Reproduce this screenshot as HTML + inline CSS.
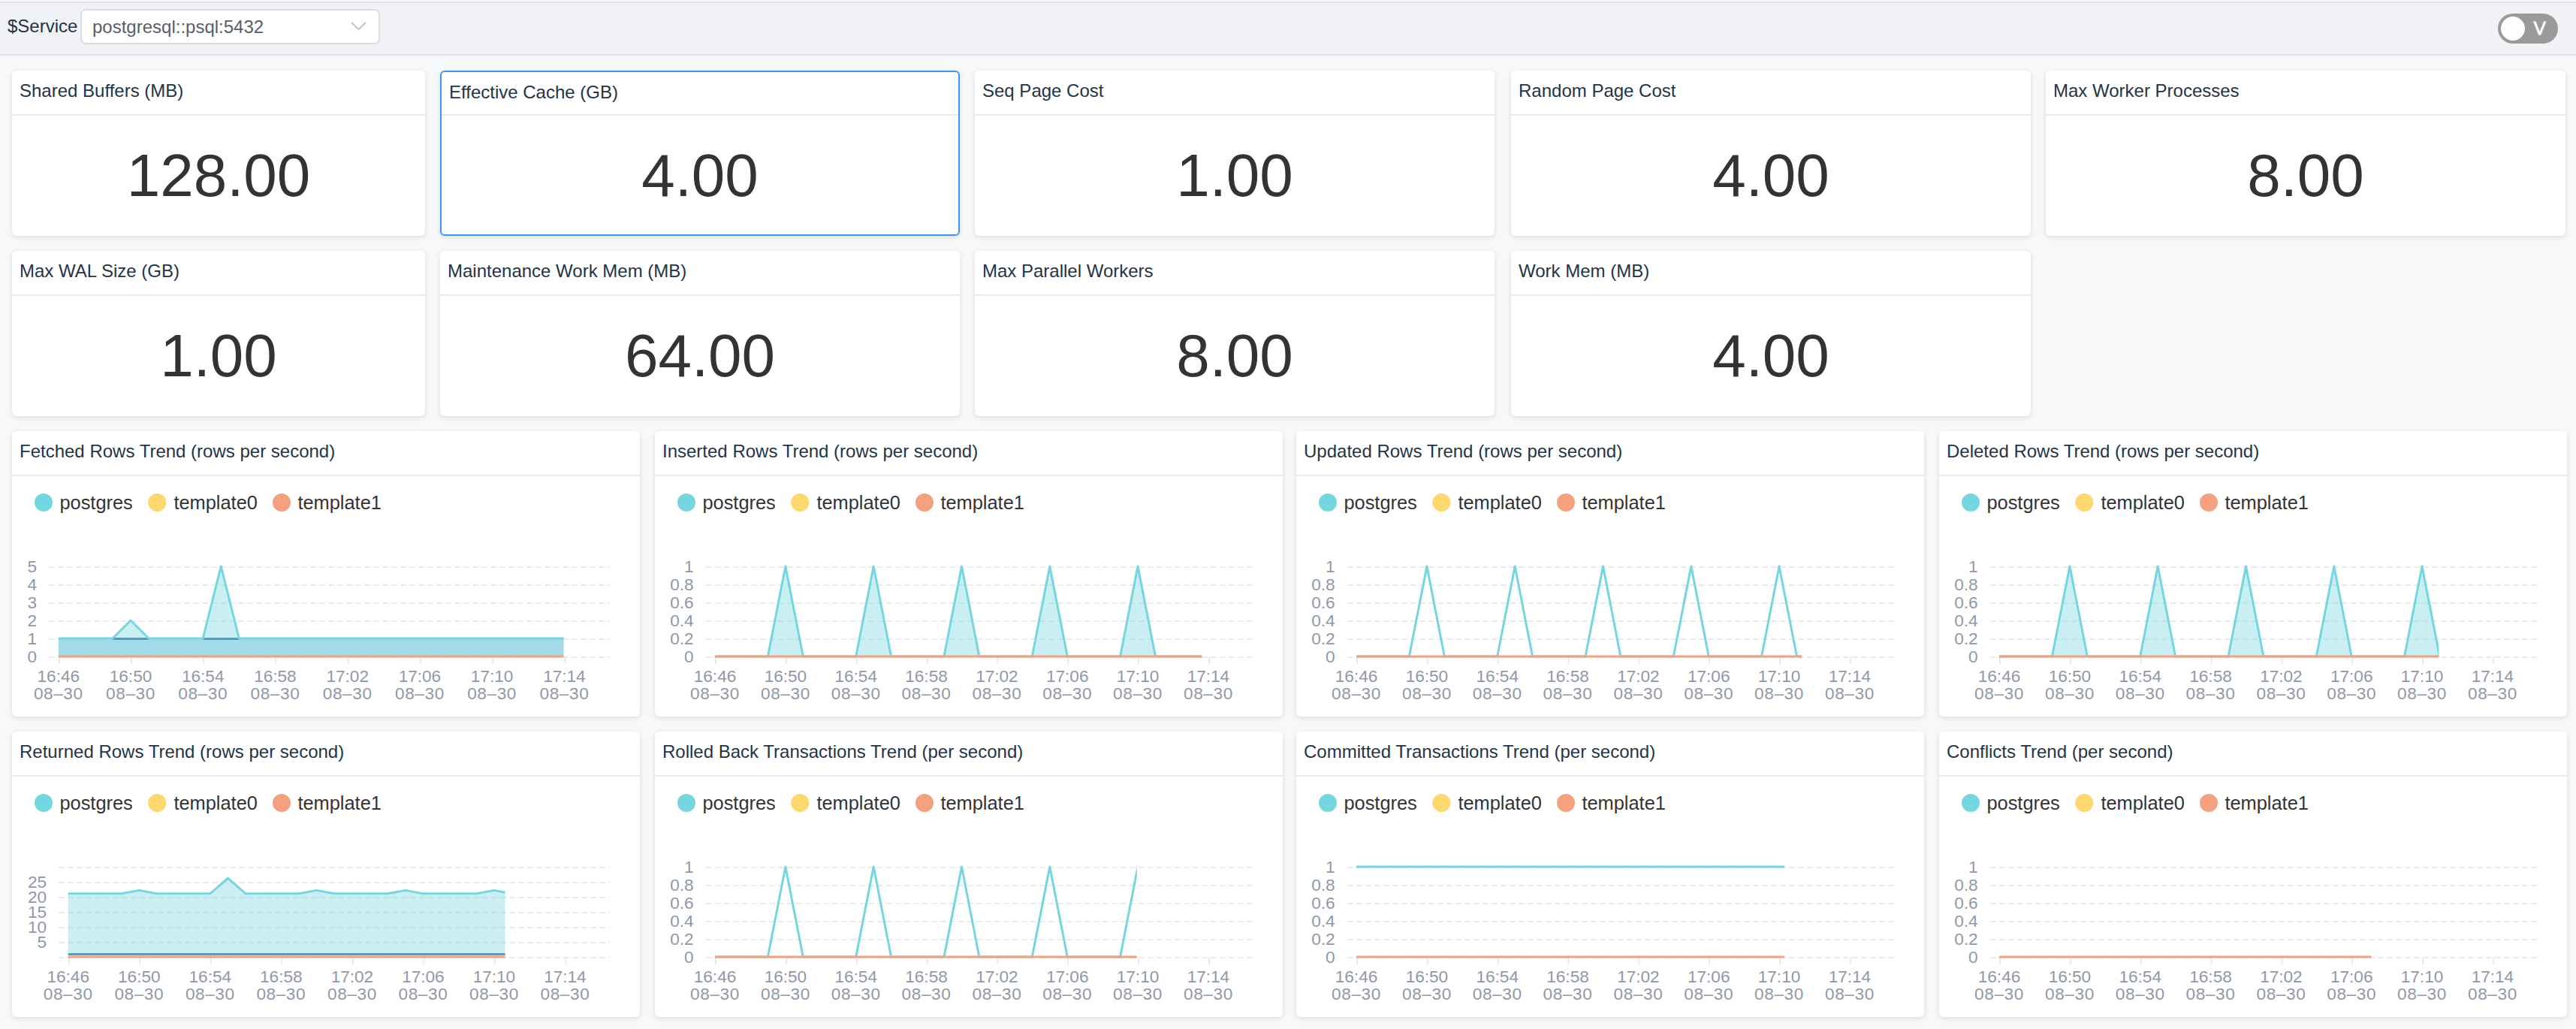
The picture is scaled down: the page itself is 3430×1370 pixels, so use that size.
<!DOCTYPE html>
<html><head><meta charset="utf-8"><style>
*{box-sizing:border-box;margin:0;padding:0}
html,body{width:3430px;height:1370px;overflow:hidden;background:#f7f8fa;font-family:"Liberation Sans", sans-serif}
.hdr{position:absolute;left:0;top:2px;width:3430px;height:72px;background:#f0f2f5;border-top:2px solid #dfe3e8;border-bottom:2px solid #dfe3e8}
.lbl{position:absolute;left:10px;top:17px;font-size:24px;color:#1f3349;line-height:28px}
.sel{position:absolute;left:107px;top:8px;width:399px;height:47px;background:#fff;border:2px solid #d9dce3;border-radius:7px}
.sel span{position:absolute;left:14px;top:8px;font-size:24px;line-height:28px;color:#595d66}
.tog{position:absolute;left:3326px;top:14px;width:80px;height:40px;border-radius:20px;background:#9a9a9a}
.knob{position:absolute;left:4px;top:4px;width:32px;height:32px;border-radius:16px;background:#fff}
.tog span{position:absolute;left:47.5px;top:5.5px;font-size:24.5px;line-height:28px;color:#fff;-webkit-text-stroke:0.8px #fff}
.p{position:absolute;background:#fff;border-radius:6px;box-shadow:0 2px 7px rgba(0,0,0,0.12)}
.p.act{border:2px solid #3a96f8}
.t{position:absolute;left:0;top:0;right:0;height:60px;border-bottom:2px solid #ebebeb}
.t span{position:absolute;left:10px;top:13px;font-size:24px;line-height:28px;color:#233447;white-space:nowrap}
.v{position:absolute;left:0;right:0;top:94px;text-align:center;font-size:80px;line-height:92px;color:#333;white-space:nowrap}
svg{position:absolute;left:0;top:0}

.ax{font-family:"Liberation Sans",sans-serif;font-size:22.6px;fill:#8f98a9}
.lg{font-family:"Liberation Sans",sans-serif;font-size:25.4px;fill:#333}
</style></head>
<body>
<div class="hdr"><div class="lbl">$Service</div><div class="sel"><span>postgresql::psql:5432</span><svg width="24" height="14" style="left:358px;top:15px"><polyline points="1,1 10.5,10 20,1" fill="none" stroke="#c0c4cc" stroke-width="2"/></svg></div><div class="tog"><div class="knob"></div><span>V</span></div></div><div class="p" style="left:16px;top:94px;width:550px;height:220px"><div class="t" style="height:60px"><span>Shared Buffers (MB)</span></div><div class="v" style="">128.00</div></div><div class="p act" style="left:586px;top:94px;width:692px;height:220px"><div class="t" style="height:58px"><span>Effective Cache (GB)</span></div><div class="v" style="top:92px">4.00</div></div><div class="p" style="left:1298px;top:94px;width:692px;height:220px"><div class="t" style="height:60px"><span>Seq Page Cost</span></div><div class="v" style="">1.00</div></div><div class="p" style="left:2012px;top:94px;width:692px;height:220px"><div class="t" style="height:60px"><span>Random Page Cost</span></div><div class="v" style="">4.00</div></div><div class="p" style="left:2724px;top:94px;width:692px;height:220px"><div class="t" style="height:60px"><span>Max Worker Processes</span></div><div class="v" style="">8.00</div></div><div class="p" style="left:16px;top:334px;width:550px;height:220px"><div class="t" style="height:60px"><span>Max WAL Size (GB)</span></div><div class="v" style="">1.00</div></div><div class="p" style="left:586px;top:334px;width:692px;height:220px"><div class="t" style="height:60px"><span>Maintenance Work Mem (MB)</span></div><div class="v" style="">64.00</div></div><div class="p" style="left:1298px;top:334px;width:692px;height:220px"><div class="t" style="height:60px"><span>Max Parallel Workers</span></div><div class="v" style="">8.00</div></div><div class="p" style="left:2012px;top:334px;width:692px;height:220px"><div class="t" style="height:60px"><span>Work Mem (MB)</span></div><div class="v" style="">4.00</div></div><div class="p" style="left:16px;top:574px;width:836px;height:380px"><div class="t"><span>Fetched Rows Trend (rows per second)</span></div><svg width="836" height="380"><line x1="49" y1="181.0" x2="796" y2="181.0" stroke="#eaebed" stroke-width="2" stroke-dasharray="8 4"/><line x1="49" y1="205.0" x2="796" y2="205.0" stroke="#eaebed" stroke-width="2" stroke-dasharray="8 4"/><line x1="49" y1="229.0" x2="796" y2="229.0" stroke="#eaebed" stroke-width="2" stroke-dasharray="8 4"/><line x1="49" y1="253.0" x2="796" y2="253.0" stroke="#eaebed" stroke-width="2" stroke-dasharray="8 4"/><line x1="49" y1="277.0" x2="796" y2="277.0" stroke="#eaebed" stroke-width="2" stroke-dasharray="8 4"/><line x1="49" y1="301.0" x2="796" y2="301.0" stroke="#eaebed" stroke-width="2" stroke-dasharray="8 4"/><text x="33" y="307.5" text-anchor="end" class="ax">0</text><text x="33" y="283.5" text-anchor="end" class="ax">1</text><text x="33" y="259.5" text-anchor="end" class="ax">2</text><text x="33" y="235.5" text-anchor="end" class="ax">3</text><text x="33" y="211.5" text-anchor="end" class="ax">4</text><text x="33" y="187.5" text-anchor="end" class="ax">5</text><line x1="62.8" y1="301" x2="62.8" y2="310" stroke="#e8eaed" stroke-width="2"/><text x="61.8" y="334.2" text-anchor="middle" class="ax">16:46</text><text x="61.8" y="356.6" text-anchor="middle" class="ax" letter-spacing="0.6">08–30</text><line x1="159.0" y1="301" x2="159.0" y2="310" stroke="#e8eaed" stroke-width="2"/><text x="158.0" y="334.2" text-anchor="middle" class="ax">16:50</text><text x="158.0" y="356.6" text-anchor="middle" class="ax" letter-spacing="0.6">08–30</text><line x1="255.2" y1="301" x2="255.2" y2="310" stroke="#e8eaed" stroke-width="2"/><text x="254.2" y="334.2" text-anchor="middle" class="ax">16:54</text><text x="254.2" y="356.6" text-anchor="middle" class="ax" letter-spacing="0.6">08–30</text><line x1="351.4" y1="301" x2="351.4" y2="310" stroke="#e8eaed" stroke-width="2"/><text x="350.4" y="334.2" text-anchor="middle" class="ax">16:58</text><text x="350.4" y="356.6" text-anchor="middle" class="ax" letter-spacing="0.6">08–30</text><line x1="447.7" y1="301" x2="447.7" y2="310" stroke="#e8eaed" stroke-width="2"/><text x="446.7" y="334.2" text-anchor="middle" class="ax">17:02</text><text x="446.7" y="356.6" text-anchor="middle" class="ax" letter-spacing="0.6">08–30</text><line x1="543.9" y1="301" x2="543.9" y2="310" stroke="#e8eaed" stroke-width="2"/><text x="542.9" y="334.2" text-anchor="middle" class="ax">17:06</text><text x="542.9" y="356.6" text-anchor="middle" class="ax" letter-spacing="0.6">08–30</text><line x1="640.1" y1="301" x2="640.1" y2="310" stroke="#e8eaed" stroke-width="2"/><text x="639.1" y="334.2" text-anchor="middle" class="ax">17:10</text><text x="639.1" y="356.6" text-anchor="middle" class="ax" letter-spacing="0.6">08–30</text><line x1="736.4" y1="301" x2="736.4" y2="310" stroke="#e8eaed" stroke-width="2"/><text x="735.4" y="334.2" text-anchor="middle" class="ax">17:14</text><text x="735.4" y="356.6" text-anchor="middle" class="ax" letter-spacing="0.6">08–30</text><g transform="translate(0,-1)"><rect x="61.8" y="277.0" width="672.7" height="24.0" fill="#a1dae8"/><polygon points="133.9,277.0 158.0,253.0 182.0,277.0" fill="#74d6df" fill-opacity="0.38"/><line x1="133.9" y1="277.5" x2="182.0" y2="277.5" stroke="#4a9cd6" stroke-width="3"/><polygon points="254.2,277.0 278.3,181.0 302.3,277.0" fill="#74d6df" fill-opacity="0.38"/><line x1="254.2" y1="277.5" x2="302.3" y2="277.5" stroke="#4a9cd6" stroke-width="3"/><polyline points="61.8,277.0 133.9,277.0 158.0,253.0 182.0,277.0 254.2,277.0 278.3,181.0 302.3,277.0 734.5,277.0" fill="none" stroke="#74d6df" stroke-width="3" stroke-linejoin="round"/><line x1="61.8" y1="301.0" x2="734.5" y2="301.0" stroke="#f5a07f" stroke-width="3"/></g><circle cx="42" cy="95" r="12" fill="#74d6df"/><text x="63.4" y="104" class="lg">postgres</text><circle cx="193.2" cy="95" r="12" fill="#fcd86f"/><text x="215.4" y="104" class="lg">template0</text><circle cx="359" cy="95" r="12" fill="#f5a07f"/><text x="380.4" y="104" class="lg">template1</text></svg></div><div class="p" style="left:872px;top:574px;width:836px;height:380px"><div class="t"><span>Inserted Rows Trend (rows per second)</span></div><svg width="836" height="380"><line x1="67.6" y1="181.0" x2="796" y2="181.0" stroke="#eaebed" stroke-width="2" stroke-dasharray="8 4"/><line x1="67.6" y1="205.0" x2="796" y2="205.0" stroke="#eaebed" stroke-width="2" stroke-dasharray="8 4"/><line x1="67.6" y1="229.0" x2="796" y2="229.0" stroke="#eaebed" stroke-width="2" stroke-dasharray="8 4"/><line x1="67.6" y1="253.0" x2="796" y2="253.0" stroke="#eaebed" stroke-width="2" stroke-dasharray="8 4"/><line x1="67.6" y1="277.0" x2="796" y2="277.0" stroke="#eaebed" stroke-width="2" stroke-dasharray="8 4"/><line x1="67.6" y1="301.0" x2="796" y2="301.0" stroke="#eaebed" stroke-width="2" stroke-dasharray="8 4"/><text x="51.599999999999994" y="307.5" text-anchor="end" class="ax">0</text><text x="51.599999999999994" y="283.5" text-anchor="end" class="ax">0.2</text><text x="51.599999999999994" y="259.5" text-anchor="end" class="ax">0.4</text><text x="51.599999999999994" y="235.5" text-anchor="end" class="ax">0.6</text><text x="51.599999999999994" y="211.5" text-anchor="end" class="ax">0.8</text><text x="51.599999999999994" y="187.5" text-anchor="end" class="ax">1</text><line x1="81.0" y1="301" x2="81.0" y2="310" stroke="#e8eaed" stroke-width="2"/><text x="80.0" y="334.2" text-anchor="middle" class="ax">16:46</text><text x="80.0" y="356.6" text-anchor="middle" class="ax" letter-spacing="0.6">08–30</text><line x1="174.9" y1="301" x2="174.9" y2="310" stroke="#e8eaed" stroke-width="2"/><text x="173.9" y="334.2" text-anchor="middle" class="ax">16:50</text><text x="173.9" y="356.6" text-anchor="middle" class="ax" letter-spacing="0.6">08–30</text><line x1="268.7" y1="301" x2="268.7" y2="310" stroke="#e8eaed" stroke-width="2"/><text x="267.7" y="334.2" text-anchor="middle" class="ax">16:54</text><text x="267.7" y="356.6" text-anchor="middle" class="ax" letter-spacing="0.6">08–30</text><line x1="362.5" y1="301" x2="362.5" y2="310" stroke="#e8eaed" stroke-width="2"/><text x="361.5" y="334.2" text-anchor="middle" class="ax">16:58</text><text x="361.5" y="356.6" text-anchor="middle" class="ax" letter-spacing="0.6">08–30</text><line x1="456.4" y1="301" x2="456.4" y2="310" stroke="#e8eaed" stroke-width="2"/><text x="455.4" y="334.2" text-anchor="middle" class="ax">17:02</text><text x="455.4" y="356.6" text-anchor="middle" class="ax" letter-spacing="0.6">08–30</text><line x1="550.2" y1="301" x2="550.2" y2="310" stroke="#e8eaed" stroke-width="2"/><text x="549.2" y="334.2" text-anchor="middle" class="ax">17:06</text><text x="549.2" y="356.6" text-anchor="middle" class="ax" letter-spacing="0.6">08–30</text><line x1="644.0" y1="301" x2="644.0" y2="310" stroke="#e8eaed" stroke-width="2"/><text x="643.0" y="334.2" text-anchor="middle" class="ax">17:10</text><text x="643.0" y="356.6" text-anchor="middle" class="ax" letter-spacing="0.6">08–30</text><line x1="737.9" y1="301" x2="737.9" y2="310" stroke="#e8eaed" stroke-width="2"/><text x="736.9" y="334.2" text-anchor="middle" class="ax">17:14</text><text x="736.9" y="356.6" text-anchor="middle" class="ax" letter-spacing="0.6">08–30</text><g transform="translate(0,-1)"><clipPath id="c_inserted"><rect x="77.0" y="0" width="651.2" height="380"/></clipPath><g clip-path="url(#c_inserted)"><polygon points="80.0,301.0 150.4,301.0 173.9,181.0 197.3,301.0 267.7,301.0 291.2,181.0 314.6,301.0 385.0,301.0 408.5,181.0 431.9,301.0 502.3,301.0 525.8,181.0 549.2,301.0 619.6,301.0 643.0,181.0 666.5,301.0 736.9,301.0 760.3,181.0 783.8,301.0 1018.4,301.0 1018.4,301.0 80.0,301.0" fill="#74d6df" fill-opacity="0.38"/><polyline points="80.0,301.0 150.4,301.0 173.9,181.0 197.3,301.0 267.7,301.0 291.2,181.0 314.6,301.0 385.0,301.0 408.5,181.0 431.9,301.0 502.3,301.0 525.8,181.0 549.2,301.0 619.6,301.0 643.0,181.0 666.5,301.0 736.9,301.0 760.3,181.0 783.8,301.0 1018.4,301.0" fill="none" stroke="#74d6df" stroke-width="3" stroke-linejoin="round"/><line x1="80.0" y1="301.0" x2="1018.4" y2="301.0" stroke="#f5a07f" stroke-width="3"/></g></g><circle cx="42" cy="95" r="12" fill="#74d6df"/><text x="63.4" y="104" class="lg">postgres</text><circle cx="193.2" cy="95" r="12" fill="#fcd86f"/><text x="215.4" y="104" class="lg">template0</text><circle cx="359" cy="95" r="12" fill="#f5a07f"/><text x="380.4" y="104" class="lg">template1</text></svg></div><div class="p" style="left:1726px;top:574px;width:836px;height:380px"><div class="t"><span>Updated Rows Trend (rows per second)</span></div><svg width="836" height="380"><line x1="67.6" y1="181.0" x2="796" y2="181.0" stroke="#eaebed" stroke-width="2" stroke-dasharray="8 4"/><line x1="67.6" y1="205.0" x2="796" y2="205.0" stroke="#eaebed" stroke-width="2" stroke-dasharray="8 4"/><line x1="67.6" y1="229.0" x2="796" y2="229.0" stroke="#eaebed" stroke-width="2" stroke-dasharray="8 4"/><line x1="67.6" y1="253.0" x2="796" y2="253.0" stroke="#eaebed" stroke-width="2" stroke-dasharray="8 4"/><line x1="67.6" y1="277.0" x2="796" y2="277.0" stroke="#eaebed" stroke-width="2" stroke-dasharray="8 4"/><line x1="67.6" y1="301.0" x2="796" y2="301.0" stroke="#eaebed" stroke-width="2" stroke-dasharray="8 4"/><text x="51.599999999999994" y="307.5" text-anchor="end" class="ax">0</text><text x="51.599999999999994" y="283.5" text-anchor="end" class="ax">0.2</text><text x="51.599999999999994" y="259.5" text-anchor="end" class="ax">0.4</text><text x="51.599999999999994" y="235.5" text-anchor="end" class="ax">0.6</text><text x="51.599999999999994" y="211.5" text-anchor="end" class="ax">0.8</text><text x="51.599999999999994" y="187.5" text-anchor="end" class="ax">1</text><line x1="81.0" y1="301" x2="81.0" y2="310" stroke="#e8eaed" stroke-width="2"/><text x="80.0" y="334.2" text-anchor="middle" class="ax">16:46</text><text x="80.0" y="356.6" text-anchor="middle" class="ax" letter-spacing="0.6">08–30</text><line x1="174.9" y1="301" x2="174.9" y2="310" stroke="#e8eaed" stroke-width="2"/><text x="173.9" y="334.2" text-anchor="middle" class="ax">16:50</text><text x="173.9" y="356.6" text-anchor="middle" class="ax" letter-spacing="0.6">08–30</text><line x1="268.7" y1="301" x2="268.7" y2="310" stroke="#e8eaed" stroke-width="2"/><text x="267.7" y="334.2" text-anchor="middle" class="ax">16:54</text><text x="267.7" y="356.6" text-anchor="middle" class="ax" letter-spacing="0.6">08–30</text><line x1="362.5" y1="301" x2="362.5" y2="310" stroke="#e8eaed" stroke-width="2"/><text x="361.5" y="334.2" text-anchor="middle" class="ax">16:58</text><text x="361.5" y="356.6" text-anchor="middle" class="ax" letter-spacing="0.6">08–30</text><line x1="456.4" y1="301" x2="456.4" y2="310" stroke="#e8eaed" stroke-width="2"/><text x="455.4" y="334.2" text-anchor="middle" class="ax">17:02</text><text x="455.4" y="356.6" text-anchor="middle" class="ax" letter-spacing="0.6">08–30</text><line x1="550.2" y1="301" x2="550.2" y2="310" stroke="#e8eaed" stroke-width="2"/><text x="549.2" y="334.2" text-anchor="middle" class="ax">17:06</text><text x="549.2" y="356.6" text-anchor="middle" class="ax" letter-spacing="0.6">08–30</text><line x1="644.0" y1="301" x2="644.0" y2="310" stroke="#e8eaed" stroke-width="2"/><text x="643.0" y="334.2" text-anchor="middle" class="ax">17:10</text><text x="643.0" y="356.6" text-anchor="middle" class="ax" letter-spacing="0.6">08–30</text><line x1="737.9" y1="301" x2="737.9" y2="310" stroke="#e8eaed" stroke-width="2"/><text x="736.9" y="334.2" text-anchor="middle" class="ax">17:14</text><text x="736.9" y="356.6" text-anchor="middle" class="ax" letter-spacing="0.6">08–30</text><g transform="translate(0,-1)"><clipPath id="c_updated"><rect x="77.0" y="0" width="595.8" height="380"/></clipPath><g clip-path="url(#c_updated)"><polyline points="80.0,301.0 150.4,301.0 173.9,181.0 197.3,301.0 267.7,301.0 291.2,181.0 314.6,301.0 385.0,301.0 408.5,181.0 431.9,301.0 502.3,301.0 525.8,181.0 549.2,301.0 619.6,301.0 643.0,181.0 666.5,301.0 736.9,301.0 760.3,181.0 783.8,301.0 1018.4,301.0" fill="none" stroke="#74d6df" stroke-width="3" stroke-linejoin="round"/><line x1="80.0" y1="301.0" x2="1018.4" y2="301.0" stroke="#f5a07f" stroke-width="3"/></g></g><circle cx="42" cy="95" r="12" fill="#74d6df"/><text x="63.4" y="104" class="lg">postgres</text><circle cx="193.2" cy="95" r="12" fill="#fcd86f"/><text x="215.4" y="104" class="lg">template0</text><circle cx="359" cy="95" r="12" fill="#f5a07f"/><text x="380.4" y="104" class="lg">template1</text></svg></div><div class="p" style="left:2582px;top:574px;width:836px;height:380px"><div class="t"><span>Deleted Rows Trend (rows per second)</span></div><svg width="836" height="380"><line x1="67.6" y1="181.0" x2="796" y2="181.0" stroke="#eaebed" stroke-width="2" stroke-dasharray="8 4"/><line x1="67.6" y1="205.0" x2="796" y2="205.0" stroke="#eaebed" stroke-width="2" stroke-dasharray="8 4"/><line x1="67.6" y1="229.0" x2="796" y2="229.0" stroke="#eaebed" stroke-width="2" stroke-dasharray="8 4"/><line x1="67.6" y1="253.0" x2="796" y2="253.0" stroke="#eaebed" stroke-width="2" stroke-dasharray="8 4"/><line x1="67.6" y1="277.0" x2="796" y2="277.0" stroke="#eaebed" stroke-width="2" stroke-dasharray="8 4"/><line x1="67.6" y1="301.0" x2="796" y2="301.0" stroke="#eaebed" stroke-width="2" stroke-dasharray="8 4"/><text x="51.599999999999994" y="307.5" text-anchor="end" class="ax">0</text><text x="51.599999999999994" y="283.5" text-anchor="end" class="ax">0.2</text><text x="51.599999999999994" y="259.5" text-anchor="end" class="ax">0.4</text><text x="51.599999999999994" y="235.5" text-anchor="end" class="ax">0.6</text><text x="51.599999999999994" y="211.5" text-anchor="end" class="ax">0.8</text><text x="51.599999999999994" y="187.5" text-anchor="end" class="ax">1</text><line x1="81.0" y1="301" x2="81.0" y2="310" stroke="#e8eaed" stroke-width="2"/><text x="80.0" y="334.2" text-anchor="middle" class="ax">16:46</text><text x="80.0" y="356.6" text-anchor="middle" class="ax" letter-spacing="0.6">08–30</text><line x1="174.9" y1="301" x2="174.9" y2="310" stroke="#e8eaed" stroke-width="2"/><text x="173.9" y="334.2" text-anchor="middle" class="ax">16:50</text><text x="173.9" y="356.6" text-anchor="middle" class="ax" letter-spacing="0.6">08–30</text><line x1="268.7" y1="301" x2="268.7" y2="310" stroke="#e8eaed" stroke-width="2"/><text x="267.7" y="334.2" text-anchor="middle" class="ax">16:54</text><text x="267.7" y="356.6" text-anchor="middle" class="ax" letter-spacing="0.6">08–30</text><line x1="362.5" y1="301" x2="362.5" y2="310" stroke="#e8eaed" stroke-width="2"/><text x="361.5" y="334.2" text-anchor="middle" class="ax">16:58</text><text x="361.5" y="356.6" text-anchor="middle" class="ax" letter-spacing="0.6">08–30</text><line x1="456.4" y1="301" x2="456.4" y2="310" stroke="#e8eaed" stroke-width="2"/><text x="455.4" y="334.2" text-anchor="middle" class="ax">17:02</text><text x="455.4" y="356.6" text-anchor="middle" class="ax" letter-spacing="0.6">08–30</text><line x1="550.2" y1="301" x2="550.2" y2="310" stroke="#e8eaed" stroke-width="2"/><text x="549.2" y="334.2" text-anchor="middle" class="ax">17:06</text><text x="549.2" y="356.6" text-anchor="middle" class="ax" letter-spacing="0.6">08–30</text><line x1="644.0" y1="301" x2="644.0" y2="310" stroke="#e8eaed" stroke-width="2"/><text x="643.0" y="334.2" text-anchor="middle" class="ax">17:10</text><text x="643.0" y="356.6" text-anchor="middle" class="ax" letter-spacing="0.6">08–30</text><line x1="737.9" y1="301" x2="737.9" y2="310" stroke="#e8eaed" stroke-width="2"/><text x="736.9" y="334.2" text-anchor="middle" class="ax">17:14</text><text x="736.9" y="356.6" text-anchor="middle" class="ax" letter-spacing="0.6">08–30</text><g transform="translate(0,-1)"><clipPath id="c_deleted"><rect x="77.0" y="0" width="588.4" height="380"/></clipPath><g clip-path="url(#c_deleted)"><polygon points="80.0,301.0 150.4,301.0 173.9,181.0 197.3,301.0 267.7,301.0 291.2,181.0 314.6,301.0 385.0,301.0 408.5,181.0 431.9,301.0 502.3,301.0 525.8,181.0 549.2,301.0 619.6,301.0 643.0,181.0 666.5,301.0 736.9,301.0 760.3,181.0 783.8,301.0 1018.4,301.0 1018.4,301.0 80.0,301.0" fill="#74d6df" fill-opacity="0.38"/><polyline points="80.0,301.0 150.4,301.0 173.9,181.0 197.3,301.0 267.7,301.0 291.2,181.0 314.6,301.0 385.0,301.0 408.5,181.0 431.9,301.0 502.3,301.0 525.8,181.0 549.2,301.0 619.6,301.0 643.0,181.0 666.5,301.0 736.9,301.0 760.3,181.0 783.8,301.0 1018.4,301.0" fill="none" stroke="#74d6df" stroke-width="3" stroke-linejoin="round"/><line x1="80.0" y1="301.0" x2="1018.4" y2="301.0" stroke="#f5a07f" stroke-width="3"/></g></g><circle cx="42" cy="95" r="12" fill="#74d6df"/><text x="63.4" y="104" class="lg">postgres</text><circle cx="193.2" cy="95" r="12" fill="#fcd86f"/><text x="215.4" y="104" class="lg">template0</text><circle cx="359" cy="95" r="12" fill="#f5a07f"/><text x="380.4" y="104" class="lg">template1</text></svg></div><div class="p" style="left:16px;top:974px;width:836px;height:380px"><div class="t"><span>Returned Rows Trend (rows per second)</span></div><svg width="836" height="380"><line x1="62.2" y1="181.0" x2="796" y2="181.0" stroke="#eaebed" stroke-width="2" stroke-dasharray="8 4"/><line x1="62.2" y1="201.0" x2="796" y2="201.0" stroke="#eaebed" stroke-width="2" stroke-dasharray="8 4"/><line x1="62.2" y1="221.0" x2="796" y2="221.0" stroke="#eaebed" stroke-width="2" stroke-dasharray="8 4"/><line x1="62.2" y1="241.0" x2="796" y2="241.0" stroke="#eaebed" stroke-width="2" stroke-dasharray="8 4"/><line x1="62.2" y1="261.0" x2="796" y2="261.0" stroke="#eaebed" stroke-width="2" stroke-dasharray="8 4"/><line x1="62.2" y1="281.0" x2="796" y2="281.0" stroke="#eaebed" stroke-width="2" stroke-dasharray="8 4"/><line x1="62.2" y1="301.0" x2="796" y2="301.0" stroke="#eaebed" stroke-width="2" stroke-dasharray="8 4"/><text x="46.2" y="287.5" text-anchor="end" class="ax">5</text><text x="46.2" y="267.5" text-anchor="end" class="ax">10</text><text x="46.2" y="247.5" text-anchor="end" class="ax">15</text><text x="46.2" y="227.5" text-anchor="end" class="ax">20</text><text x="46.2" y="207.5" text-anchor="end" class="ax">25</text><line x1="75.7" y1="301" x2="75.7" y2="310" stroke="#e8eaed" stroke-width="2"/><text x="74.7" y="334.2" text-anchor="middle" class="ax">16:46</text><text x="74.7" y="356.6" text-anchor="middle" class="ax" letter-spacing="0.6">08–30</text><line x1="170.3" y1="301" x2="170.3" y2="310" stroke="#e8eaed" stroke-width="2"/><text x="169.3" y="334.2" text-anchor="middle" class="ax">16:50</text><text x="169.3" y="356.6" text-anchor="middle" class="ax" letter-spacing="0.6">08–30</text><line x1="264.8" y1="301" x2="264.8" y2="310" stroke="#e8eaed" stroke-width="2"/><text x="263.8" y="334.2" text-anchor="middle" class="ax">16:54</text><text x="263.8" y="356.6" text-anchor="middle" class="ax" letter-spacing="0.6">08–30</text><line x1="359.3" y1="301" x2="359.3" y2="310" stroke="#e8eaed" stroke-width="2"/><text x="358.3" y="334.2" text-anchor="middle" class="ax">16:58</text><text x="358.3" y="356.6" text-anchor="middle" class="ax" letter-spacing="0.6">08–30</text><line x1="453.9" y1="301" x2="453.9" y2="310" stroke="#e8eaed" stroke-width="2"/><text x="452.9" y="334.2" text-anchor="middle" class="ax">17:02</text><text x="452.9" y="356.6" text-anchor="middle" class="ax" letter-spacing="0.6">08–30</text><line x1="548.4" y1="301" x2="548.4" y2="310" stroke="#e8eaed" stroke-width="2"/><text x="547.4" y="334.2" text-anchor="middle" class="ax">17:06</text><text x="547.4" y="356.6" text-anchor="middle" class="ax" letter-spacing="0.6">08–30</text><line x1="642.9" y1="301" x2="642.9" y2="310" stroke="#e8eaed" stroke-width="2"/><text x="641.9" y="334.2" text-anchor="middle" class="ax">17:10</text><text x="641.9" y="356.6" text-anchor="middle" class="ax" letter-spacing="0.6">08–30</text><line x1="737.4" y1="301" x2="737.4" y2="310" stroke="#e8eaed" stroke-width="2"/><text x="736.4" y="334.2" text-anchor="middle" class="ax">17:14</text><text x="736.4" y="356.6" text-anchor="middle" class="ax" letter-spacing="0.6">08–30</text><g transform="translate(0,-1)"><polygon points="74.7,216.8 145.6,216.8 169.3,212.4 192.9,216.8 263.8,216.8 287.4,196.2 311.1,216.8 382.0,216.8 405.6,212.4 429.2,216.8 500.1,216.8 523.7,212.4 547.4,216.8 618.3,216.8 641.9,212.4 656.6,215.2 656.6,297.4 74.7,297.4" fill="#74d6df" fill-opacity="0.38"/><polyline points="74.7,216.8 145.6,216.8 169.3,212.4 192.9,216.8 263.8,216.8 287.4,196.2 311.1,216.8 382.0,216.8 405.6,212.4 429.2,216.8 500.1,216.8 523.7,212.4 547.4,216.8 618.3,216.8 641.9,212.4 656.6,215.2" fill="none" stroke="#74d6df" stroke-width="3" stroke-linejoin="round"/><line x1="74.7" y1="297.4" x2="656.6" y2="297.4" stroke="#4a9cd6" stroke-width="3"/><line x1="74.7" y1="301.0" x2="656.6" y2="301.0" stroke="#f5a07f" stroke-width="3"/></g><circle cx="42" cy="95" r="12" fill="#74d6df"/><text x="63.4" y="104" class="lg">postgres</text><circle cx="193.2" cy="95" r="12" fill="#fcd86f"/><text x="215.4" y="104" class="lg">template0</text><circle cx="359" cy="95" r="12" fill="#f5a07f"/><text x="380.4" y="104" class="lg">template1</text></svg></div><div class="p" style="left:872px;top:974px;width:836px;height:380px"><div class="t"><span>Rolled Back Transactions Trend (per second)</span></div><svg width="836" height="380"><line x1="67.6" y1="181.0" x2="796" y2="181.0" stroke="#eaebed" stroke-width="2" stroke-dasharray="8 4"/><line x1="67.6" y1="205.0" x2="796" y2="205.0" stroke="#eaebed" stroke-width="2" stroke-dasharray="8 4"/><line x1="67.6" y1="229.0" x2="796" y2="229.0" stroke="#eaebed" stroke-width="2" stroke-dasharray="8 4"/><line x1="67.6" y1="253.0" x2="796" y2="253.0" stroke="#eaebed" stroke-width="2" stroke-dasharray="8 4"/><line x1="67.6" y1="277.0" x2="796" y2="277.0" stroke="#eaebed" stroke-width="2" stroke-dasharray="8 4"/><line x1="67.6" y1="301.0" x2="796" y2="301.0" stroke="#eaebed" stroke-width="2" stroke-dasharray="8 4"/><text x="51.599999999999994" y="307.5" text-anchor="end" class="ax">0</text><text x="51.599999999999994" y="283.5" text-anchor="end" class="ax">0.2</text><text x="51.599999999999994" y="259.5" text-anchor="end" class="ax">0.4</text><text x="51.599999999999994" y="235.5" text-anchor="end" class="ax">0.6</text><text x="51.599999999999994" y="211.5" text-anchor="end" class="ax">0.8</text><text x="51.599999999999994" y="187.5" text-anchor="end" class="ax">1</text><line x1="81.0" y1="301" x2="81.0" y2="310" stroke="#e8eaed" stroke-width="2"/><text x="80.0" y="334.2" text-anchor="middle" class="ax">16:46</text><text x="80.0" y="356.6" text-anchor="middle" class="ax" letter-spacing="0.6">08–30</text><line x1="174.9" y1="301" x2="174.9" y2="310" stroke="#e8eaed" stroke-width="2"/><text x="173.9" y="334.2" text-anchor="middle" class="ax">16:50</text><text x="173.9" y="356.6" text-anchor="middle" class="ax" letter-spacing="0.6">08–30</text><line x1="268.7" y1="301" x2="268.7" y2="310" stroke="#e8eaed" stroke-width="2"/><text x="267.7" y="334.2" text-anchor="middle" class="ax">16:54</text><text x="267.7" y="356.6" text-anchor="middle" class="ax" letter-spacing="0.6">08–30</text><line x1="362.5" y1="301" x2="362.5" y2="310" stroke="#e8eaed" stroke-width="2"/><text x="361.5" y="334.2" text-anchor="middle" class="ax">16:58</text><text x="361.5" y="356.6" text-anchor="middle" class="ax" letter-spacing="0.6">08–30</text><line x1="456.4" y1="301" x2="456.4" y2="310" stroke="#e8eaed" stroke-width="2"/><text x="455.4" y="334.2" text-anchor="middle" class="ax">17:02</text><text x="455.4" y="356.6" text-anchor="middle" class="ax" letter-spacing="0.6">08–30</text><line x1="550.2" y1="301" x2="550.2" y2="310" stroke="#e8eaed" stroke-width="2"/><text x="549.2" y="334.2" text-anchor="middle" class="ax">17:06</text><text x="549.2" y="356.6" text-anchor="middle" class="ax" letter-spacing="0.6">08–30</text><line x1="644.0" y1="301" x2="644.0" y2="310" stroke="#e8eaed" stroke-width="2"/><text x="643.0" y="334.2" text-anchor="middle" class="ax">17:10</text><text x="643.0" y="356.6" text-anchor="middle" class="ax" letter-spacing="0.6">08–30</text><line x1="737.9" y1="301" x2="737.9" y2="310" stroke="#e8eaed" stroke-width="2"/><text x="736.9" y="334.2" text-anchor="middle" class="ax">17:14</text><text x="736.9" y="356.6" text-anchor="middle" class="ax" letter-spacing="0.6">08–30</text><g transform="translate(0,-1)"><clipPath id="c_rolled"><rect x="77.0" y="0" width="564.8" height="380"/></clipPath><g clip-path="url(#c_rolled)"><polyline points="80.0,301.0 150.4,301.0 173.9,181.0 197.3,301.0 267.7,301.0 291.2,181.0 314.6,301.0 385.0,301.0 408.5,181.0 431.9,301.0 502.3,301.0 525.8,181.0 549.2,301.0 619.6,301.0 643.0,181.0 666.5,301.0 736.9,301.0 760.3,181.0 783.8,301.0 1018.4,301.0" fill="none" stroke="#74d6df" stroke-width="3" stroke-linejoin="round"/><line x1="80.0" y1="301.0" x2="1018.4" y2="301.0" stroke="#f5a07f" stroke-width="3"/></g></g><circle cx="42" cy="95" r="12" fill="#74d6df"/><text x="63.4" y="104" class="lg">postgres</text><circle cx="193.2" cy="95" r="12" fill="#fcd86f"/><text x="215.4" y="104" class="lg">template0</text><circle cx="359" cy="95" r="12" fill="#f5a07f"/><text x="380.4" y="104" class="lg">template1</text></svg></div><div class="p" style="left:1726px;top:974px;width:836px;height:380px"><div class="t"><span>Committed Transactions Trend (per second)</span></div><svg width="836" height="380"><line x1="67.6" y1="181.0" x2="796" y2="181.0" stroke="#eaebed" stroke-width="2" stroke-dasharray="8 4"/><line x1="67.6" y1="205.0" x2="796" y2="205.0" stroke="#eaebed" stroke-width="2" stroke-dasharray="8 4"/><line x1="67.6" y1="229.0" x2="796" y2="229.0" stroke="#eaebed" stroke-width="2" stroke-dasharray="8 4"/><line x1="67.6" y1="253.0" x2="796" y2="253.0" stroke="#eaebed" stroke-width="2" stroke-dasharray="8 4"/><line x1="67.6" y1="277.0" x2="796" y2="277.0" stroke="#eaebed" stroke-width="2" stroke-dasharray="8 4"/><line x1="67.6" y1="301.0" x2="796" y2="301.0" stroke="#eaebed" stroke-width="2" stroke-dasharray="8 4"/><text x="51.599999999999994" y="307.5" text-anchor="end" class="ax">0</text><text x="51.599999999999994" y="283.5" text-anchor="end" class="ax">0.2</text><text x="51.599999999999994" y="259.5" text-anchor="end" class="ax">0.4</text><text x="51.599999999999994" y="235.5" text-anchor="end" class="ax">0.6</text><text x="51.599999999999994" y="211.5" text-anchor="end" class="ax">0.8</text><text x="51.599999999999994" y="187.5" text-anchor="end" class="ax">1</text><line x1="81.0" y1="301" x2="81.0" y2="310" stroke="#e8eaed" stroke-width="2"/><text x="80.0" y="334.2" text-anchor="middle" class="ax">16:46</text><text x="80.0" y="356.6" text-anchor="middle" class="ax" letter-spacing="0.6">08–30</text><line x1="174.9" y1="301" x2="174.9" y2="310" stroke="#e8eaed" stroke-width="2"/><text x="173.9" y="334.2" text-anchor="middle" class="ax">16:50</text><text x="173.9" y="356.6" text-anchor="middle" class="ax" letter-spacing="0.6">08–30</text><line x1="268.7" y1="301" x2="268.7" y2="310" stroke="#e8eaed" stroke-width="2"/><text x="267.7" y="334.2" text-anchor="middle" class="ax">16:54</text><text x="267.7" y="356.6" text-anchor="middle" class="ax" letter-spacing="0.6">08–30</text><line x1="362.5" y1="301" x2="362.5" y2="310" stroke="#e8eaed" stroke-width="2"/><text x="361.5" y="334.2" text-anchor="middle" class="ax">16:58</text><text x="361.5" y="356.6" text-anchor="middle" class="ax" letter-spacing="0.6">08–30</text><line x1="456.4" y1="301" x2="456.4" y2="310" stroke="#e8eaed" stroke-width="2"/><text x="455.4" y="334.2" text-anchor="middle" class="ax">17:02</text><text x="455.4" y="356.6" text-anchor="middle" class="ax" letter-spacing="0.6">08–30</text><line x1="550.2" y1="301" x2="550.2" y2="310" stroke="#e8eaed" stroke-width="2"/><text x="549.2" y="334.2" text-anchor="middle" class="ax">17:06</text><text x="549.2" y="356.6" text-anchor="middle" class="ax" letter-spacing="0.6">08–30</text><line x1="644.0" y1="301" x2="644.0" y2="310" stroke="#e8eaed" stroke-width="2"/><text x="643.0" y="334.2" text-anchor="middle" class="ax">17:10</text><text x="643.0" y="356.6" text-anchor="middle" class="ax" letter-spacing="0.6">08–30</text><line x1="737.9" y1="301" x2="737.9" y2="310" stroke="#e8eaed" stroke-width="2"/><text x="736.9" y="334.2" text-anchor="middle" class="ax">17:14</text><text x="736.9" y="356.6" text-anchor="middle" class="ax" letter-spacing="0.6">08–30</text><g transform="translate(0,-1)"><line x1="80.0" y1="181.0" x2="649.9" y2="181.0" stroke="#74d6df" stroke-width="3"/><line x1="80.0" y1="301.0" x2="649.9" y2="301.0" stroke="#f5a07f" stroke-width="3"/></g><circle cx="42" cy="95" r="12" fill="#74d6df"/><text x="63.4" y="104" class="lg">postgres</text><circle cx="193.2" cy="95" r="12" fill="#fcd86f"/><text x="215.4" y="104" class="lg">template0</text><circle cx="359" cy="95" r="12" fill="#f5a07f"/><text x="380.4" y="104" class="lg">template1</text></svg></div><div class="p" style="left:2582px;top:974px;width:836px;height:380px"><div class="t"><span>Conflicts Trend (per second)</span></div><svg width="836" height="380"><line x1="67.6" y1="181.0" x2="796" y2="181.0" stroke="#eaebed" stroke-width="2" stroke-dasharray="8 4"/><line x1="67.6" y1="205.0" x2="796" y2="205.0" stroke="#eaebed" stroke-width="2" stroke-dasharray="8 4"/><line x1="67.6" y1="229.0" x2="796" y2="229.0" stroke="#eaebed" stroke-width="2" stroke-dasharray="8 4"/><line x1="67.6" y1="253.0" x2="796" y2="253.0" stroke="#eaebed" stroke-width="2" stroke-dasharray="8 4"/><line x1="67.6" y1="277.0" x2="796" y2="277.0" stroke="#eaebed" stroke-width="2" stroke-dasharray="8 4"/><line x1="67.6" y1="301.0" x2="796" y2="301.0" stroke="#eaebed" stroke-width="2" stroke-dasharray="8 4"/><text x="51.599999999999994" y="307.5" text-anchor="end" class="ax">0</text><text x="51.599999999999994" y="283.5" text-anchor="end" class="ax">0.2</text><text x="51.599999999999994" y="259.5" text-anchor="end" class="ax">0.4</text><text x="51.599999999999994" y="235.5" text-anchor="end" class="ax">0.6</text><text x="51.599999999999994" y="211.5" text-anchor="end" class="ax">0.8</text><text x="51.599999999999994" y="187.5" text-anchor="end" class="ax">1</text><line x1="81.0" y1="301" x2="81.0" y2="310" stroke="#e8eaed" stroke-width="2"/><text x="80.0" y="334.2" text-anchor="middle" class="ax">16:46</text><text x="80.0" y="356.6" text-anchor="middle" class="ax" letter-spacing="0.6">08–30</text><line x1="174.9" y1="301" x2="174.9" y2="310" stroke="#e8eaed" stroke-width="2"/><text x="173.9" y="334.2" text-anchor="middle" class="ax">16:50</text><text x="173.9" y="356.6" text-anchor="middle" class="ax" letter-spacing="0.6">08–30</text><line x1="268.7" y1="301" x2="268.7" y2="310" stroke="#e8eaed" stroke-width="2"/><text x="267.7" y="334.2" text-anchor="middle" class="ax">16:54</text><text x="267.7" y="356.6" text-anchor="middle" class="ax" letter-spacing="0.6">08–30</text><line x1="362.5" y1="301" x2="362.5" y2="310" stroke="#e8eaed" stroke-width="2"/><text x="361.5" y="334.2" text-anchor="middle" class="ax">16:58</text><text x="361.5" y="356.6" text-anchor="middle" class="ax" letter-spacing="0.6">08–30</text><line x1="456.4" y1="301" x2="456.4" y2="310" stroke="#e8eaed" stroke-width="2"/><text x="455.4" y="334.2" text-anchor="middle" class="ax">17:02</text><text x="455.4" y="356.6" text-anchor="middle" class="ax" letter-spacing="0.6">08–30</text><line x1="550.2" y1="301" x2="550.2" y2="310" stroke="#e8eaed" stroke-width="2"/><text x="549.2" y="334.2" text-anchor="middle" class="ax">17:06</text><text x="549.2" y="356.6" text-anchor="middle" class="ax" letter-spacing="0.6">08–30</text><line x1="644.0" y1="301" x2="644.0" y2="310" stroke="#e8eaed" stroke-width="2"/><text x="643.0" y="334.2" text-anchor="middle" class="ax">17:10</text><text x="643.0" y="356.6" text-anchor="middle" class="ax" letter-spacing="0.6">08–30</text><line x1="737.9" y1="301" x2="737.9" y2="310" stroke="#e8eaed" stroke-width="2"/><text x="736.9" y="334.2" text-anchor="middle" class="ax">17:14</text><text x="736.9" y="356.6" text-anchor="middle" class="ax" letter-spacing="0.6">08–30</text><g transform="translate(0,-1)"><line x1="80.0" y1="301.0" x2="575.3" y2="301.0" stroke="#f5a07f" stroke-width="3"/></g><circle cx="42" cy="95" r="12" fill="#74d6df"/><text x="63.4" y="104" class="lg">postgres</text><circle cx="193.2" cy="95" r="12" fill="#fcd86f"/><text x="215.4" y="104" class="lg">template0</text><circle cx="359" cy="95" r="12" fill="#f5a07f"/><text x="380.4" y="104" class="lg">template1</text></svg></div>
</body></html>
